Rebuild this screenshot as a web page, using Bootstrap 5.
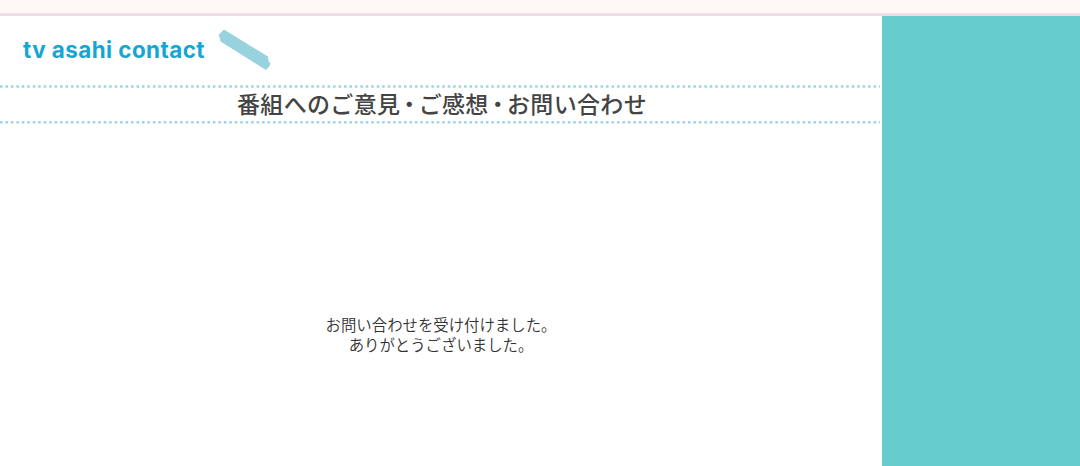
<!DOCTYPE html>
<html lang="ja">
<head>
    <meta charset="UTF-8">
    <meta name="viewport" content="width=device-width, initial-scale=1.0">
    <title>tv asahi contact</title>
    <link href="https://cdn.jsdelivr.net/npm/bootstrap@5.3.0/dist/css/bootstrap.min.css" rel="stylesheet">
    <style>
        body {
            font-family: "Noto Sans CJK JP", sans-serif;
            background: #66cccc;
        }
        .top-strip {
            height: 16px;
            background: #fff8f7;
            border-bottom: 3px solid #efdde4;
        }
        .contact-page {
            width: 882px;
        }
        .brand-row {
            height: 69px;
            padding-left: 23px;
        }
        .brand-name {
            width: 183px;
            font-family: Inter, sans-serif;
            font-size: 22.4px;
            font-weight: 700;
            line-height: 68px;
            letter-spacing: .45px;
            color: #16a6d2;
        }
        .brand-bar {
            margin: 13px 0 0 12px;
        }
        .page-title {
            height: 33px;
            font-size: 23px;
            font-weight: 500;
            line-height: 31px;
            letter-spacing: .35px;
            padding-left: 2px;
            color: #444;
        }
        .title-dot {
            font-feature-settings: "halt";
            padding: 0 3.2px;
        }
        .thanks {
            padding-top: 190px;
            font-size: 15.4px;
            font-weight: 350;
            line-height: 20px;
            color: #333;
        }
    </style>
</head>
<body class="vh-100 overflow-hidden d-flex flex-column">
    <div class="top-strip flex-shrink-0"></div>

    <main class="contact-page flex-grow-1 bg-white">
        <!-- Logo -->
        <header class="brand-row d-flex align-items-start">
            <div class="brand-name text-nowrap">tv asahi contact</div>
            <svg class="brand-bar" width="54" height="44" viewBox="0 0 54 44" aria-hidden="true">
                <path d="M6 0.5 L50 27.5 L50.5 32 L52.5 34.5 L51.5 37 L48 41 L2.5 12.5 L2 9.5 L0.5 6 Z" fill="#98d2df"/>
            </svg>
        </header>

        <!-- Title between dotted rules -->
        <svg class="d-block" width="882" height="3" aria-hidden="true">
            <line x1="0" y1="1.5" x2="880" y2="1.5" stroke="#9ad5e6" stroke-width="2.4" stroke-dasharray="2.5 2.96"/>
        </svg>
        <h1 class="page-title text-center text-nowrap mb-0">番組へのご意見<span class="title-dot">・</span>ご感想<span class="title-dot">・</span>お問い合わせ</h1>
        <svg class="d-block" width="882" height="3" aria-hidden="true">
            <line x1="0" y1="1.3" x2="880" y2="1.3" stroke="#9ad5e6" stroke-width="2.4" stroke-dasharray="2.5 2.96"/>
        </svg>

        <!-- Message -->
        <p class="thanks text-center mb-0">お問い合わせを受け付けました。<br>ありがとうございました。</p>
    </main>

    <script src="https://cdn.jsdelivr.net/npm/bootstrap@5.3.0/dist/js/bootstrap.bundle.min.js"></script>
</body>
</html>
